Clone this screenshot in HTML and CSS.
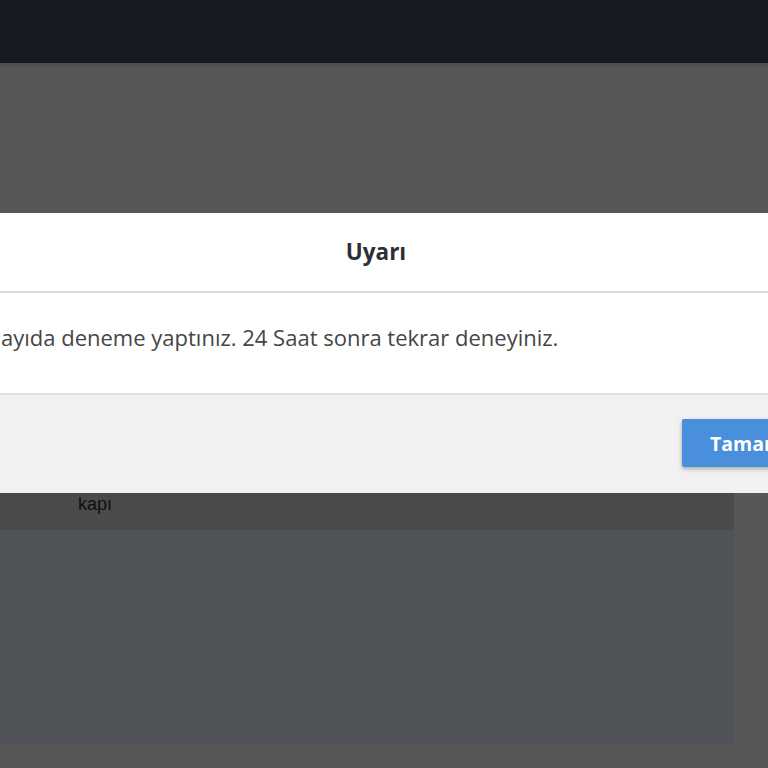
FILE: index.html
```html
<!DOCTYPE html>
<html lang="tr">
<head>
<meta charset="utf-8">
<title>Uyarı</title>
<link rel="stylesheet" href="styles.css">
</head>
<body>
<header class="topbar"></header>
<div class="backdrop-top"></div>
<div class="modal">
  <div class="modal-header"><h2 class="modal-title">Uyarı</h2></div>
  <div class="modal-body"><p class="modal-text">ayıda deneme yaptınız. 24 Saat sonra tekrar deneyiniz.</p></div>
  <div class="modal-footer"><button class="btn-ok" type="button">Tamam</button></div>
</div>
<div class="below">
  <div class="page-col">
    <div class="row-label">kapı</div>
    <div class="panel"></div>
  </div>
</div>
</body>
</html>
```

FILE: styles.css
```css
html, body {
  margin: 0;
  padding: 0;
}
body {
  width: 768px;
  height: 768px;
  overflow: hidden;
  background: #575757;
  font-family: "Open Sans", "Liberation Sans", sans-serif;
}
.topbar {
  height: 63px;
  background: #181a22;
  border-bottom: 4px solid #4e4f51;
}
.backdrop-top {
  height: 146px;
  background: #575757;
}
.modal {
  width: 904px;
  margin-left: -76px;
  background: #ffffff;
}
.modal-header {
  height: 78px;
  display: flex;
  align-items: center;
  justify-content: center;
  border-bottom: 2px solid #dcdcdc;
}
.modal-title {
  margin: 0;
  margin-top: -2px;
  font-size: 22.5px;
  font-weight: 700;
  color: #2d2d35;
}
.modal-body {
  height: 100px;
  display: flex;
  align-items: center;
  padding-left: 77px;
  border-bottom: 2px solid #dedede;
}
.modal-text {
  margin: 0;
  margin-top: -12px;
  font-size: 22px;
  color: #464646;
}
.modal-footer {
  height: 98px;
  background: #f1f1f1;
  display: flex;
  align-items: center;
  justify-content: flex-end;
  padding-right: 20px;
}
.btn-ok {
  width: 126px;
  height: 48px;
  margin-top: -2px;
  border: 0;
  border-radius: 2px;
  background: #4a8fdb;
  color: #ffffff;
  font-family: "Open Sans", "Liberation Sans", sans-serif;
  font-size: 19.5px;
  font-weight: 700;
  text-align: left;
  padding-left: 28px;
  box-shadow: 0 2px 4px rgba(0, 0, 0, 0.3);
}
.below {
  display: flex;
}
.page-col {
  width: 734px;
}
.row-label {
  height: 37px;
  background: #4a4a4a;
  padding-left: 78px;
  font-family: "Liberation Sans", Arial, sans-serif;
  font-size: 18px;
  line-height: 20px;
  color: #101010;
  box-sizing: border-box;
  padding-top: 1px;
}
.panel {
  height: 214px;
  background: #505358;
}
```
